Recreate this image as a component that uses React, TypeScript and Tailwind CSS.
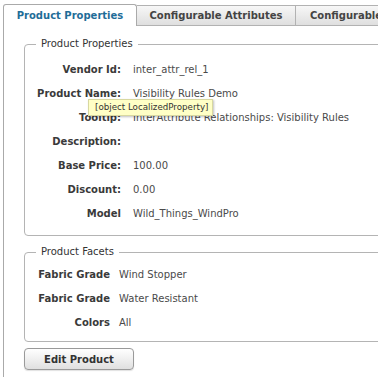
import React from "react";

const productRows: [string, string][] = [
  ["Vendor Id:", "inter_attr_rel_1"],
  ["Product Name:", "Visibility Rules Demo"],
  ["Tooltip:", "InterAttribute Relationships: Visibility Rules"],
  ["Description:", ""],
  ["Base Price:", "100.00"],
  ["Discount:", "0.00"],
  ["Model", "Wild_Things_WindPro"],
];

const facetRows: [string, string][] = [
  ["Fabric Grade", "Wind Stopper"],
  ["Fabric Grade", "Water Resistant"],
  ["Colors", "All"],
];

function Group({
  title,
  rows,
  labelWidth,
  gap,
  className,
}: {
  title: string;
  rows: [string, string][];
  labelWidth: string;
  gap: string;
  className?: string;
}) {
  return (
    <fieldset className={`border border-[#b4b4b4] rounded-[4px] ${className ?? ""}`}>
      <legend className="ml-[11px] px-[5px] text-[#333] leading-[14px]">{title}</legend>
      <div className="flex flex-col">
        {rows.map(([label, value], i) => (
          <div key={i} className={`flex items-center h-[24px] ${gap}`}>
            <span className={`${labelWidth} text-right font-bold text-[#3a3a3a] shrink-0`}>
              {label}
            </span>
            <span className="text-[#4a4a4a] whitespace-nowrap">{value}</span>
          </div>
        ))}
      </div>
    </fieldset>
  );
}

export default function App() {
  return (
    <div className="relative w-[378px] h-[377px] overflow-hidden bg-white font-['DejaVu_Sans',_Verdana,_sans-serif] text-[10px]">
      <div className="w-[460px] pl-[3px] pt-[4px]">
        {/* Tabs */}
        <div className="flex items-end">
          <div className="shrink-0 w-[134px] h-[22px] flex items-center justify-center border border-b-0 border-[#aaaaaa] rounded-t-[3px] bg-white font-bold text-[#1f6d98]">
            Product Properties
          </div>
          <div className="shrink-0 w-[159px] h-[21px] flex items-center justify-center border-t border-r border-b border-[#b2b2b2] bg-gradient-to-b from-[#f7f7f7] to-[#dfdfdf] font-bold text-[#444]">
            Configurable Attributes
          </div>
          <div className="shrink-0 w-[159px] h-[21px] flex items-center pl-[14px] border-t border-r border-b border-[#b2b2b2] rounded-tr-[3px] bg-gradient-to-b from-[#f7f7f7] to-[#dfdfdf] font-bold text-[#444] whitespace-nowrap">
            Configurable Options
          </div>
        </div>

        {/* Panel */}
        <div className="border-l border-[#aaaaaa] pl-[20px] pt-[11px] pb-[12px]">
          <Group
            title="Product Properties"
            rows={productRows}
            labelWidth="w-[96px]"
            gap="gap-[12px]"
            className="pt-[6px] pb-[10px]"
          />
          <Group
            title="Product Facets"
            rows={facetRows}
            labelWidth="w-[85px]"
            gap="gap-[9px]"
            className="mt-[9px] pt-[3px] pb-[7px]"
          />
          <button className="mt-[6px] w-[110px] h-[22px] border border-[#9a9a9a] rounded-[4px] bg-gradient-to-b from-[#ffffff] to-[#e0e0e0] font-bold text-[#333] shadow-[0_1px_1px_rgba(0,0,0,0.12)]">
            Edit Product
          </button>
        </div>
      </div>

      {/* Tooltip */}
      <div className="absolute left-[88px] top-[99px] w-[125px] h-[17px] flex items-center pl-[6px] bg-[#ffffc6] border border-[#d8d8a0] text-[8.7px] text-[#333] whitespace-nowrap shadow-[1px_1px_2px_rgba(0,0,0,0.25)]">
        [object LocalizedProperty]
      </div>
    </div>
  );
}
